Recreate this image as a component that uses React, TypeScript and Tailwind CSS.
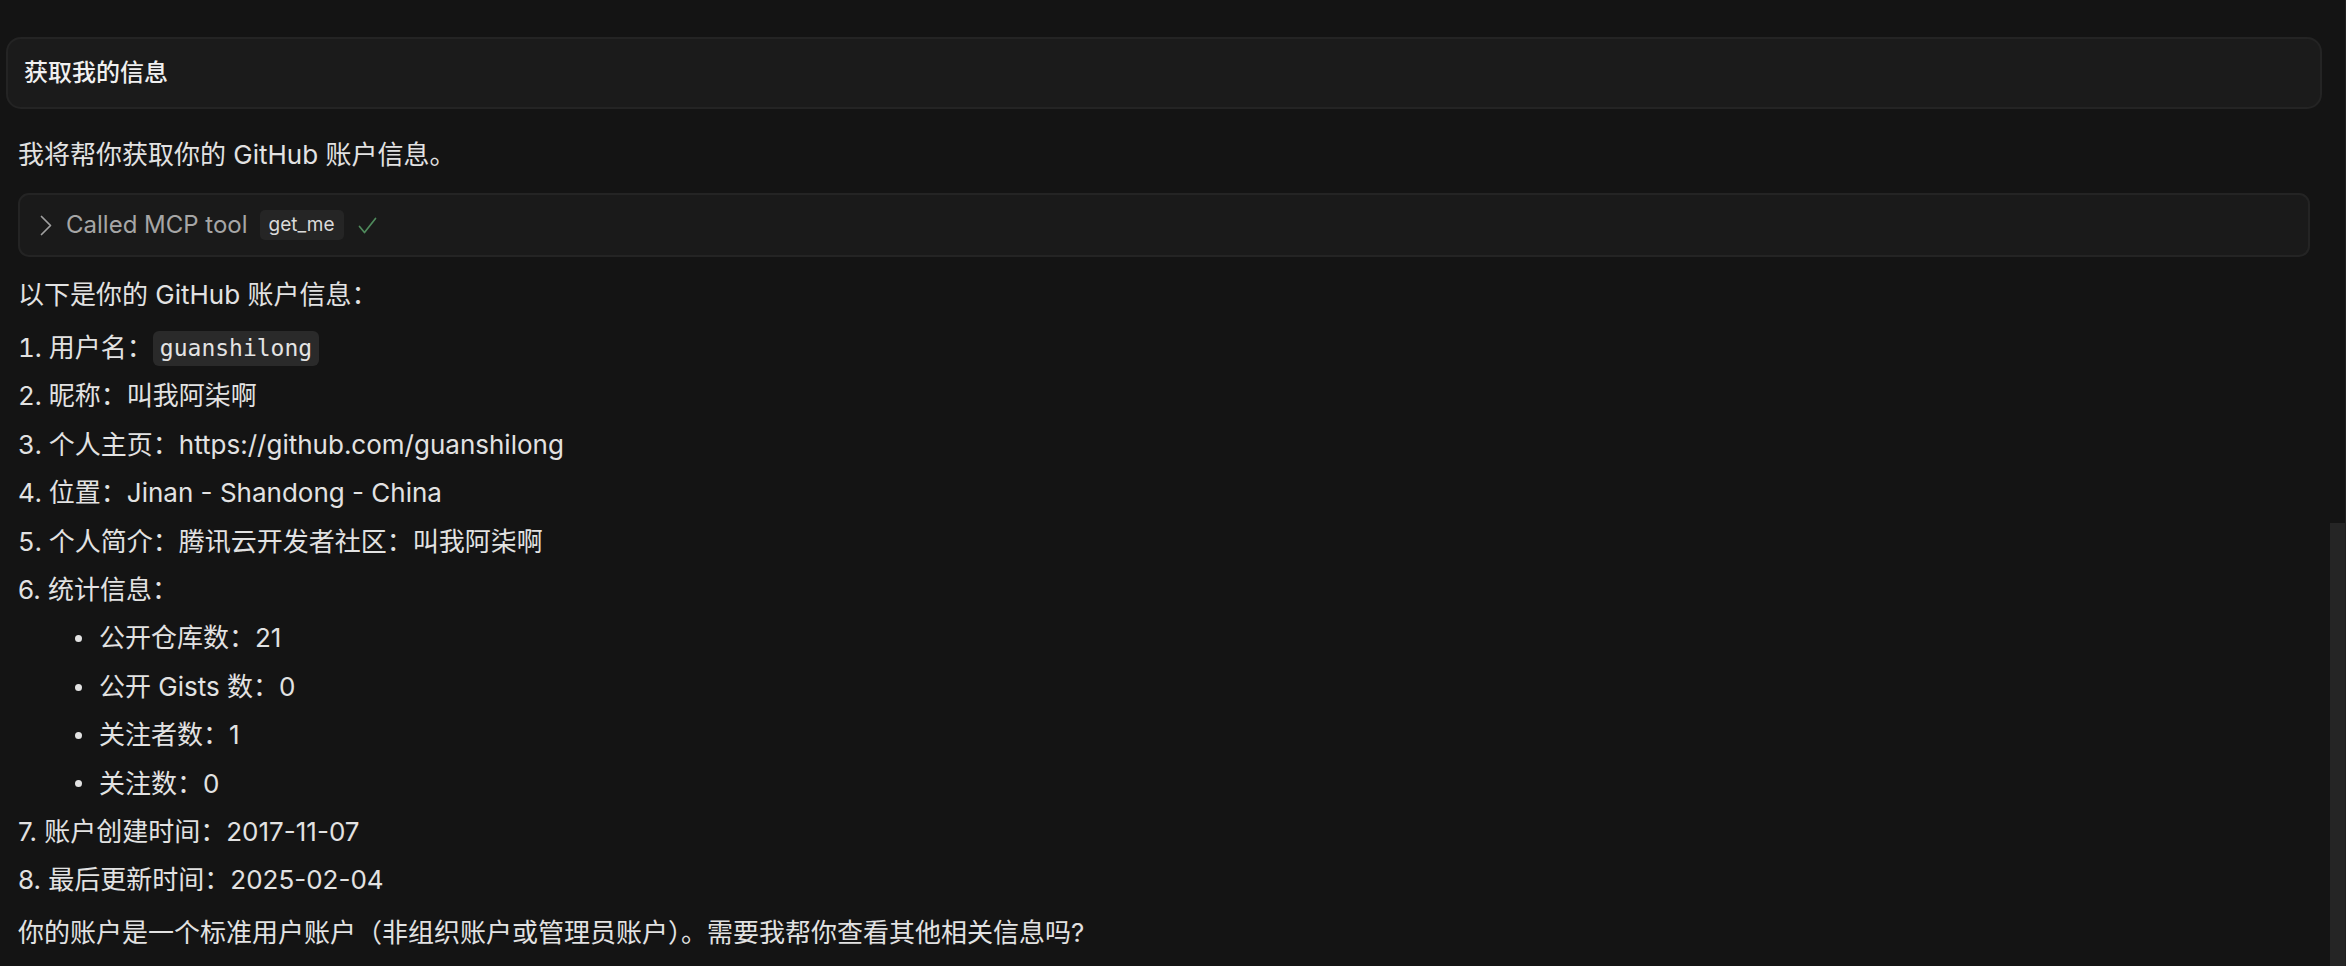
const font = "font-['Inter','Noto_Sans_CJK_SC',sans-serif]"

const numbered = [
  { n: "1.", label: "用户名：", code: "guanshilong" },
  { n: "2.", label: "昵称：", text: "叫我阿柒啊" },
  { n: "3.", label: "个人主页：", text: "https://github.com/guanshilong" },
  { n: "4.", label: "位置：", text: "Jinan - Shandong - China" },
  { n: "5.", label: "个人简介：", text: "腾讯云开发者社区：叫我阿柒啊" },
]

const stats = ["公开仓库数：21", "公开 Gists 数：0", "关注者数：1", "关注数：0"]

function Code({ children }: { children: string }) {
  return (
    <span className="inline-flex h-[35px] items-center rounded-[6px] bg-[#2a2a2a] px-[7px] align-middle font-['DejaVu_Sans_Mono',monospace] text-[23px] text-[#e4e4e4]">
      {children}
    </span>
  )
}

export default function App() {
  return (
    <div className={`flex h-[966px] w-full overflow-hidden bg-[#141414] ${font} text-[#e2e2e2]`}>
      {/* chat column */}
      <div className="flex-1 pl-[6px] pr-[8px] pt-[37px]">
        {/* user message */}
        <div className="flex h-[72px] items-center rounded-[15px] border-2 border-[#242424] bg-[#1b1b1b] px-[16px]">
          <span className="text-[24px] font-medium text-[#f0f0f0]">获取我的信息</span>
        </div>

        {/* assistant reply */}
        <div className="px-[12px]">
          <p className="mt-[26px] text-[26px] leading-[39px]">我将帮你获取你的 GitHub 账户信息。</p>

          <div className="mt-[19px] flex h-[64px] items-center rounded-[11px] border-2 border-[#242424] bg-[#1a1a1a] pl-[20px]">
            <svg width="12" height="21" viewBox="0 0 12 21" fill="none" stroke="#a0a0a0" strokeWidth="1.7" strokeLinecap="round" strokeLinejoin="round">
              <polyline points="1.5,1.5 10.5,10.5 1.5,19.5" />
            </svg>
            <span className="ml-[14px] text-[24px] text-[#a6a6a6]">Called MCP tool</span>
            <span className="ml-[12px] flex h-[30px] items-center rounded-[5px] bg-[#252525] px-[9px] text-[19px] text-[#dadada]">
              get_me
            </span>
            <svg className="ml-[14px]" width="19" height="17" viewBox="0 0 19 17" fill="none" stroke="#4f8a5c" strokeWidth="1.7" strokeLinecap="round" strokeLinejoin="round">
              <polyline points="1.5,9.5 6.5,15.5 17.5,1.5" />
            </svg>
          </div>

          <p className="mt-[18px] text-[26px] leading-[39px]">以下是你的 GitHub 账户信息：</p>

          <div className="mt-[10px] text-[26px] leading-[48.4px]">
            {numbered.map((item) => (
              <div key={item.n} className="flex items-center">
                <span className="tabular-nums">{item.n}&nbsp;</span>
                <span>{item.label}</span>
                {item.code ? <Code>{item.code}</Code> : <span>{item.text}</span>}
              </div>
            ))}
            <div>6.&nbsp;统计信息：</div>
            {stats.map((s) => (
              <div key={s} className="flex items-center pl-[57px]">
                <span className="mr-[17px] h-[7px] w-[7px] rounded-full bg-[#e2e2e2]" />
                <span>{s}</span>
              </div>
            ))}
            <div>7.&nbsp;账户创建时间：2017-11-07</div>
            <div>8.&nbsp;最后更新时间：2025-02-04</div>
          </div>

          <p className="mt-[8px] text-[26px] leading-[39px]">
            你的账户是一个标准用户账户（非组织账户或管理员账户）。需要我帮你查看其他相关信息吗?
          </p>
        </div>
      </div>

      {/* scrollbar */}
      <div className="flex w-[16px] flex-col border-r border-[#202020]">
        <div className="h-[523px]" />
        <div className="flex-1 bg-[#252525]" />
      </div>
    </div>
  )
}
